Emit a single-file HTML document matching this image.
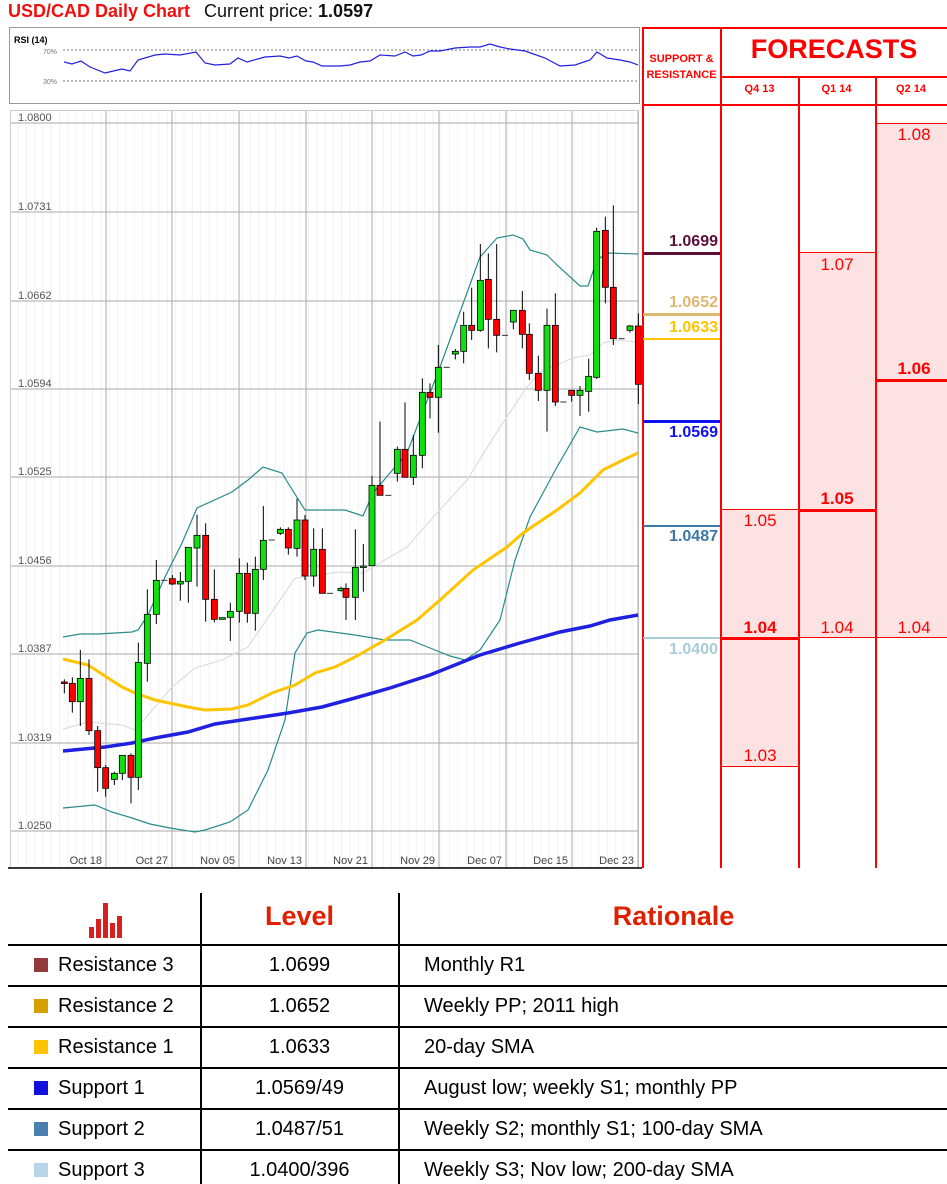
<!DOCTYPE html>
<html><head><meta charset="utf-8">
<style>
body{margin:0;width:947px;height:1184px;overflow:hidden;background:#fff;font-family:"Liberation Sans",sans-serif;position:relative}
.a{position:absolute}
.t{white-space:nowrap}
.rl{position:absolute;background:#f00}
.pk{position:absolute;background:#fde2e3}
.fl{position:absolute;color:#f00;font-size:17px;text-align:center;width:78px}
.sr{position:absolute;left:643px;width:75px;text-align:right;font-weight:bold;font-size:16px}
table{border-collapse:collapse}
</style></head><body>
<div class="a t" style="left:8px;top:1px;font-size:18px;font-weight:bold;color:#f01010">USD/CAD Daily Chart</div>
<div class="a t" style="left:204px;top:1px;font-size:18px;color:#111">Current price: <b>1.0597</b></div>

<svg class="a" style="left:0;top:0" width="642" height="880" xmlns="http://www.w3.org/2000/svg">
<rect x="9.5" y="27.5" width="630" height="76" fill="#fff" stroke="#999"/>
<text x="14" y="43" font-size="9" font-weight="bold" font-family="Liberation Sans">RSI (14)</text>
<text x="57" y="54" font-size="7" fill="#777" text-anchor="end" font-family="Liberation Sans">70%</text>
<text x="57" y="84" font-size="7" fill="#777" text-anchor="end" font-family="Liberation Sans">30%</text>
<line x1="63" y1="50" x2="638" y2="50" stroke="#777" stroke-dasharray="2,2"/>
<line x1="63" y1="81" x2="638" y2="81" stroke="#777" stroke-dasharray="2,2"/>
<polyline fill="none" stroke="#2020e0" stroke-width="1.2" points="64,62 72,64 81,61 90,67 105,73 122,69 130,71 138,60 155,55 165,54 180,55 196,52 205,63 215,65 230,64 238,58 247,62 265,57 280,56 289,58 297,56 306,61 313,62 322,66 340,66 350,65 360,62 370,61 380,55 395,56 405,52 413,56 421,55 430,51 440,51 455,48 470,47 480,47 490,44 500,47 510,49 525,51 545,58 560,66 575,65 590,60 597,52 607,58 620,60 630,62 638,65"/>
<rect x="10.5" y="110.5" width="628" height="757" fill="#fff" stroke="#ccc"/>
<g id="grid"></g>
<g font-family="Liberation Sans" font-size="11" fill="#555">
<text x="18" y="121">1.0800</text><text x="18" y="210">1.0731</text><text x="18" y="299">1.0662</text><text x="18" y="387">1.0594</text><text x="18" y="475">1.0525</text><text x="18" y="564">1.0456</text><text x="18" y="652">1.0387</text><text x="18" y="741">1.0319</text><text x="18" y="829">1.0250</text>
</g>
<g font-family="Liberation Sans" font-size="11" fill="#444" text-anchor="end">
<text x="102" y="864">Oct 18</text><text x="168" y="864">Oct 27</text><text x="235" y="864">Nov 05</text><text x="302" y="864">Nov 13</text><text x="368" y="864">Nov 21</text><text x="435" y="864">Nov 29</text><text x="502" y="864">Dec 07</text><text x="568" y="864">Dec 15</text><text x="634" y="864">Dec 23</text>
</g>
<line x1="8" y1="868" x2="642" y2="868" stroke="#000" stroke-width="1.5"/>
<polyline fill="none" stroke="#ddd" stroke-width="1.2" points="63,729 88,722 122,725 135,730 155,707 172,687 195,668 222,660 248,647 295,578 340,572 363,573 407,547 437,513 467,480 500,427 527,387 540,372 573,358 590,355 603,343 617,340 638,342"/>
<polyline fill="none" stroke="#2a8a8a" stroke-width="1.2" points="63,637 80,634 98,634 115,633 132,632 138,630 148,615 165,577 182,543 197,508 232,492 248,480 263,467 282,473 288,483 305,510 345,510 363,516 373,493 407,453 440,367 480,257 497,238 513,235 523,239 530,250 547,255 557,265 580,286 588,286 597,260 607,253 638,254"/>
<polyline fill="none" stroke="#2a8a8a" stroke-width="1.2" points="63,808 95,805 112,812 132,818 150,824 170,828 195,832 205,830 230,822 248,810 268,770 285,720 295,653 307,633 318,630 355,635 385,640 410,640 430,648 450,656 465,660 480,650 500,620 515,560 530,517 557,467 580,427 597,432 623,429 638,433"/>
<polyline fill="none" stroke="#ffc400" stroke-width="3" points="63,659 88,665 122,687 135,693 155,700 188,707 205,710 232,709 248,705 272,693 295,685 315,673 335,667 355,657 385,640 417,620 440,600 473,570 507,547 523,533 557,510 580,493 603,470 623,460 638,453"/>
<polyline fill="none" stroke="#2020e0" stroke-width="3.5" points="63,751 105,747 132,743 155,738 188,732 215,724 255,718 288,713 322,707 355,698 390,688 430,675 480,655 520,643 560,632 590,626 610,620 638,615"/>
<g id="cd"></g>
</svg>

<!-- right panel -->
<div class="pk" style="left:721px;top:510px;width:77px;height:256px"></div>
<div class="pk" style="left:798px;top:252px;width:77px;height:386px"></div>
<div class="pk" style="left:875px;top:123px;width:72px;height:515px"></div>
<div class="rl" style="left:642px;top:27px;width:1.5px;height:841px"></div>
<div class="rl" style="left:720px;top:27px;width:1.5px;height:841px"></div>
<div class="rl" style="left:798px;top:76px;width:1.5px;height:792px"></div>
<div class="rl" style="left:875px;top:76px;width:1.5px;height:792px"></div>
<div class="rl" style="left:642px;top:27px;width:305px;height:1.5px"></div>
<div class="rl" style="left:720px;top:76px;width:227px;height:1.5px"></div>
<div class="rl" style="left:642px;top:104px;width:305px;height:1.5px"></div>
<div class="a t" style="left:643px;top:51px;width:77px;text-align:center;font-size:11px;font-weight:bold;color:#f00;line-height:16px">SUPPORT &amp;<br>RESISTANCE</div>
<div class="a t" style="left:721px;top:34px;width:226px;text-align:center;font-size:27px;font-weight:bold;color:#f00">FORECASTS</div>
<div class="a t" style="left:721px;top:83px;width:77px;text-align:center;font-size:11px;font-weight:bold;color:#f00">Q4 13</div>
<div class="a t" style="left:798px;top:83px;width:77px;text-align:center;font-size:11px;font-weight:bold;color:#f00">Q1 14</div>
<div class="a t" style="left:875px;top:83px;width:72px;text-align:center;font-size:11px;font-weight:bold;color:#f00">Q2 14</div>
<!-- S&R lines -->
<div class="a" style="left:643px;top:252px;width:77px;height:3px;background:#5a1038"></div>
<div class="sr" style="top:233px;color:#5a1038">1.0699</div>
<div class="a" style="left:643px;top:313px;width:77px;height:3px;background:#dcb870"></div>
<div class="sr" style="top:294px;color:#dcb870">1.0652</div>
<div class="a" style="left:643px;top:338px;width:77px;height:2px;background:#ffc400"></div>
<div class="sr" style="top:319px;color:#ffc400">1.0633</div>
<div class="a" style="left:643px;top:420px;width:77px;height:3px;background:#1010f0"></div>
<div class="sr" style="top:424px;color:#1010f0">1.0569</div>
<div class="a" style="left:643px;top:525px;width:77px;height:2px;background:#3a78a8"></div>
<div class="sr" style="top:528px;color:#3a78a8">1.0487</div>
<div class="a" style="left:643px;top:637px;width:77px;height:2px;background:#a8ccd8"></div>
<div class="sr" style="top:641px;color:#a8ccd8">1.0400</div>
<!-- forecast lines -->
<div class="rl" style="left:721px;top:509px;width:77px;height:1px"></div>
<div class="rl" style="left:721px;top:637px;width:77px;height:3px"></div>
<div class="rl" style="left:721px;top:766px;width:77px;height:1px"></div>
<div class="fl" style="left:721px;top:511px">1.05</div>
<div class="fl" style="left:721px;top:618px;font-weight:bold">1.04</div>
<div class="fl" style="left:721px;top:746px">1.03</div>
<div class="rl" style="left:798px;top:252px;width:77px;height:1px"></div>
<div class="rl" style="left:798px;top:509px;width:77px;height:3px"></div>
<div class="rl" style="left:798px;top:637px;width:77px;height:1px"></div>
<div class="fl" style="left:798px;top:255px">1.07</div>
<div class="fl" style="left:798px;top:489px;font-weight:bold">1.05</div>
<div class="fl" style="left:798px;top:618px">1.04</div>
<div class="rl" style="left:875px;top:123px;width:72px;height:1px"></div>
<div class="rl" style="left:875px;top:379px;width:72px;height:3px"></div>
<div class="rl" style="left:875px;top:637px;width:72px;height:1px"></div>
<div class="fl" style="left:875px;top:125px;width:78px">1.08</div>
<div class="fl" style="left:875px;top:359px;width:78px;font-weight:bold">1.06</div>
<div class="fl" style="left:875px;top:618px;width:78px">1.04</div>

<!-- table -->
<div class="a" style="left:200px;top:893px;width:1.5px;height:291px;background:#000"></div>
<div class="a" style="left:398px;top:893px;width:1.5px;height:291px;background:#000"></div>
<div class="a" style="left:8px;top:944px;width:939px;height:1.5px;background:#000"></div>
<div class="a" style="left:8px;top:985px;width:939px;height:1.5px;background:#000"></div>
<div class="a" style="left:8px;top:1026px;width:939px;height:1.5px;background:#000"></div>
<div class="a" style="left:8px;top:1067px;width:939px;height:1.5px;background:#000"></div>
<div class="a" style="left:8px;top:1108px;width:939px;height:1.5px;background:#000"></div>
<div class="a" style="left:8px;top:1149px;width:939px;height:1.5px;background:#000"></div>
<svg class="a" style="left:88px;top:902px" width="38" height="38"><g fill="#d82020"><rect x="1" y="25" width="5" height="11"/><rect x="8" y="17" width="5" height="19"/><rect x="15" y="1" width="5" height="35"/><rect x="22" y="21" width="5" height="15"/><rect x="29" y="14" width="5" height="22"/></g></svg>
<div class="a t" style="left:201px;top:901px;width:197px;text-align:center;font-size:27px;font-weight:bold;color:#e02000">Level</div>
<div class="a t" style="left:400px;top:901px;width:547px;text-align:center;font-size:27px;font-weight:bold;color:#e02000">Rationale</div>
<div id="rows"></div>
<div class="a" style="left:34px;top:958px;width:14px;height:14px;background:#943a3a"></div>
<div class="a" style="left:34px;top:999px;width:14px;height:14px;background:#d4a000"></div>
<div class="a" style="left:34px;top:1040px;width:14px;height:14px;background:#ffc400"></div>
<div class="a" style="left:34px;top:1081px;width:14px;height:14px;background:#1010e0"></div>
<div class="a" style="left:34px;top:1122px;width:14px;height:14px;background:#4a80b0"></div>
<div class="a" style="left:34px;top:1163px;width:14px;height:14px;background:#b8d4e8"></div>
<div class="a t" style="left:58px;top:954px;font-size:20px">Resistance 3</div>
<div class="a t" style="left:58px;top:995px;font-size:20px">Resistance 2</div>
<div class="a t" style="left:58px;top:1036px;font-size:20px">Resistance 1</div>
<div class="a t" style="left:58px;top:1077px;font-size:20px">Support 1</div>
<div class="a t" style="left:58px;top:1118px;font-size:20px">Support 2</div>
<div class="a t" style="left:58px;top:1159px;font-size:20px">Support 3</div>
<div class="a t" style="left:201px;top:954px;width:197px;text-align:center;font-size:20px">1.0699</div>
<div class="a t" style="left:201px;top:995px;width:197px;text-align:center;font-size:20px">1.0652</div>
<div class="a t" style="left:201px;top:1036px;width:197px;text-align:center;font-size:20px">1.0633</div>
<div class="a t" style="left:201px;top:1077px;width:197px;text-align:center;font-size:20px">1.0569/49</div>
<div class="a t" style="left:201px;top:1118px;width:197px;text-align:center;font-size:20px">1.0487/51</div>
<div class="a t" style="left:201px;top:1159px;width:197px;text-align:center;font-size:20px">1.0400/396</div>
<div class="a t" style="left:424px;top:954px;font-size:20px">Monthly R1</div>
<div class="a t" style="left:424px;top:995px;font-size:20px">Weekly PP; 2011 high</div>
<div class="a t" style="left:424px;top:1036px;font-size:20px">20-day SMA</div>
<div class="a t" style="left:424px;top:1077px;font-size:20px">August low; weekly S1; monthly PP</div>
<div class="a t" style="left:424px;top:1118px;font-size:20px">Weekly S2; monthly S1; 100-day SMA</div>
<div class="a t" style="left:424px;top:1159px;font-size:20px">Weekly S3; Nov low; 200-day SMA</div>

<script>
var NS="http://www.w3.org/2000/svg";
function el(p,n,a){var e=document.createElementNS(NS,n);for(var k in a)e.setAttribute(k,a[k]);p.appendChild(e);return e;}
var g=document.getElementById("grid");
for(var x=18;x<638;x+=8.3)el(g,"line",{x1:x,y1:111,x2:x,y2:867,stroke:"#f2f2f2"});
[123,212,301,389,477,566,654,743,831].forEach(function(y){el(g,"line",{x1:11,y1:y,x2:638,y2:y,stroke:"#aaa"});});
[106,172,239,306,372,439,506,572,638].forEach(function(x){el(g,"line",{x1:x,y1:111,x2:x,y2:867,stroke:"#aaa"});});
var c=document.getElementById("cd");
// zoom4: x=55+zx/3, y=420+zy/3 ; [zx, top, bot, hi, lo, col]
var A=[[28,786,790,778,820,'r'],[52,790,845,772,878,'r'],[76,775,845,690,918,'g'],[102,775,932,718,945,'r'],[128,932,1043,918,1115,'r'],[152,1043,1105,1035,1130,'r'],[178,1060,1078,1055,1095,'g'],[202,1006,1060,1006,1080,'g'],[228,1006,1072,1000,1150,'r'],[250,727,1072,668,1110,'g'],[277,583,730,508,785,'g'],[304,481,583,420,612,'g'],[328,481,481,481,481,'d'],[352,476,492,465,495,'r'],[376,484,492,456,542,'g'],[400,382,484,382,548,'g'],[426,346,384,284,500,'g'],[452,346,538,310,605,'r'],[478,538,598,448,607,'r'],[502,593,598,593,598,'g'],[526,574,592,548,663,'g'],[553,460,574,415,608,'g'],[577,460,580,428,608,'r'],[601,448,580,410,632,'g'],[625,361,448,258,480,'g'],[650,360,360,360,360,'d'],[676,328,340,322,345,'g'],[700,328,384,322,404,'r'],[726,300,385,236,410,'g'],[750,300,468,285,480,'r'],[776,388,468,325,500,'g'],[802,388,520,325,520,'r'],[825,520,520,520,520,'d']];
var B=[[3,1165,1172,1160,1175,'g'],[18,1165,1192,1150,1260,'r'],[46,1102,1192,988,1260,'g'],[70,1098,1102,1032,1175,'g'],[96,856,1097,828,1097,'g'],[120,856,886,665,886,'r'],[145,886,886,886,886,'d'],[172,748,820,740,845,'g'],[195,748,832,607,832,'r'],[220,766,832,705,855,'g'],[247,577,766,535,805,'g'],[270,577,592,550,655,'r'],[295,502,592,435,698,'g'],[320,502,502,502,502,'d'],[346,454,462,447,478,'g'],[371,376,454,335,490,'g'],[395,376,391,263,420,'r'],[421,241,391,132,395,'g'],[445,238,358,160,445,'r'],[470,358,406,132,457,'r'],[495,406,406,406,406,'d'],[520,331,366,331,388,'g'],[547,331,403,273,445,'r'],[568,403,520,370,540,'r'],[595,520,571,467,603,'r'],[621,376,571,326,695,'g'],[646,376,606,280,618,'r'],[670,606,606,606,606,'d'],[695,571,586,571,605,'r'],[720,571,586,558,648,'g'],[746,529,574,476,635,'g'],[770,94,532,83,537,'g'],[796,91,262,50,310,'r'],[820,262,416,16,435,'r'],[845,416,416,416,416,'d'],[870,378,391,375,398,'g'],[895,378,553,340,612,'r']];
function draw(arr,x0,y0){arr.forEach(function(d){var x=x0+d[0]/3,t=y0+d[1]/3,b=y0+d[2]/3,h=y0+d[3]/3,l=y0+d[4]/3;
if(d[5]=='d'){el(c,"line",{x1:x-3,y1:t,x2:x+3,y2:t,stroke:"#333","stroke-width":1});return;}
el(c,"line",{x1:x,y1:h,x2:x,y2:l,stroke:"#000","stroke-width":1});
el(c,"rect",{x:x-3,y:t,width:6,height:Math.max(b-t,1.5),fill:d[5]=='g'?"#10e010":"#f00",stroke:"#000","stroke-width":0.8});});}
draw(A,55,420);draw(B,340,200);
</script>
</body></html>
